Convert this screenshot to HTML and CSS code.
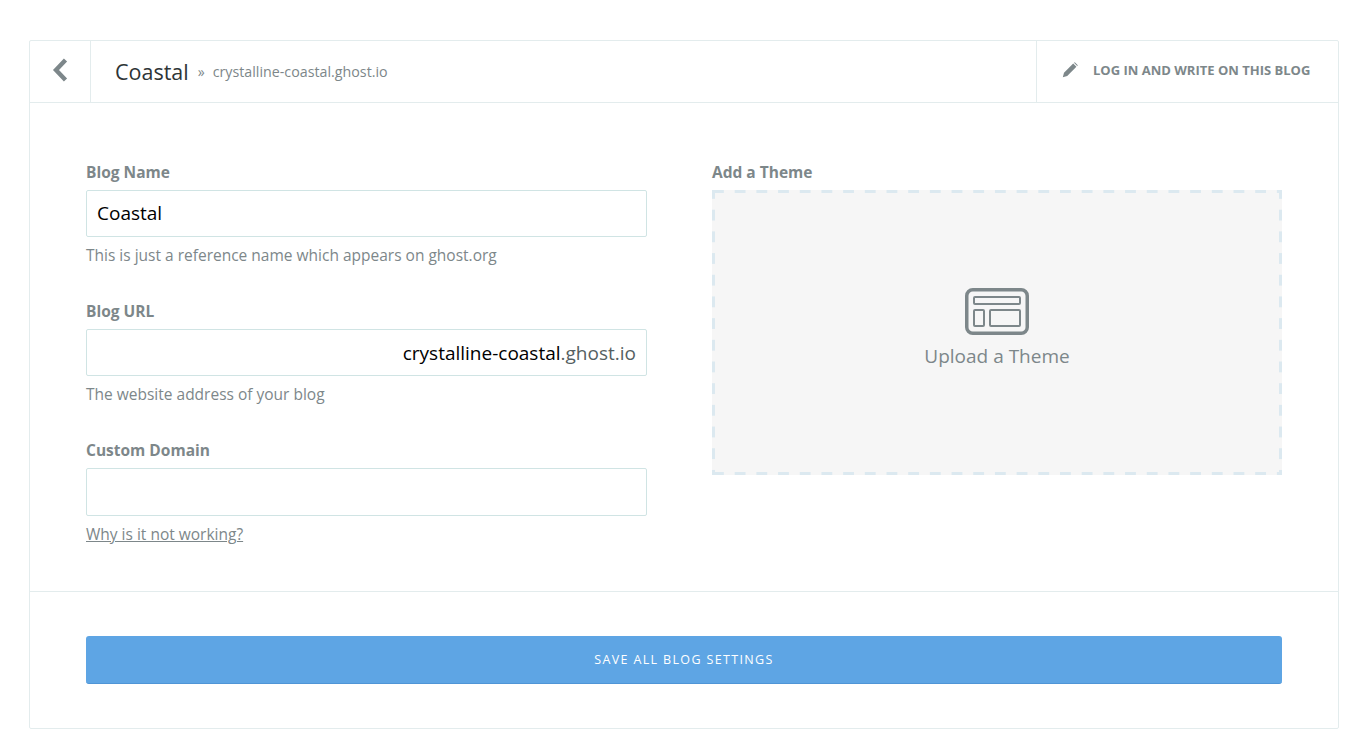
FILE: index.html
```html
<!DOCTYPE html>
<html lang="en">
<head>
  <meta charset="UTF-8">
  <meta name="viewport" content="width=device-width, initial-scale=1.0">
  <title>Blog Settings</title>
  <link rel="stylesheet" href="styles.css">
</head>
<body>
  <div class="panel">
    <header class="panel-header">
      <a class="back-link" href="#">
        <svg width="16" height="24" viewBox="0 0 16 24"><path d="M13.5 2 4 12l9.5 10" fill="none" stroke="#7d878a" stroke-width="4.4"/></svg>
      </a>
      <div class="blog-title">
        <span class="blog-name">Coastal</span>
        <span class="blog-sep">»</span>
        <span class="blog-address">crystalline-coastal.ghost.io</span>
      </div>
      <a class="write-link" href="#">
        <svg width="16" height="16" viewBox="0 0 16 16"><path d="M.8 15.2l1.2-4.4L11.2 1.6l3.2 3.2-9.2 9.2zM12 .8l.8-.6 3 3-.6.8z" fill="#7d878a"/></svg>
        <span>LOG IN AND WRITE ON THIS BLOG</span>
      </a>
    </header>

    <form class="settings">
      <div class="settings-left">
        <div class="field">
          <label for="blog-name">Blog Name</label>
          <input type="text" id="blog-name" class="name-input" value="Coastal">
          <p class="help">This is just a reference name which appears on ghost.org</p>
        </div>
        <div class="field">
          <label>Blog URL</label>
          <div class="url-input"><span class="url-sub">crystalline-coastal</span>.ghost.io</div>
          <p class="help">The website address of your blog</p>
        </div>
        <div class="field">
          <label for="custom-domain">Custom Domain</label>
          <input type="text" id="custom-domain" class="domain-input">
          <p class="help"><a href="#">Why is it not working?</a></p>
        </div>
      </div>
      <div class="settings-right">
        <label>Add a Theme</label>
        <div class="dropzone">
          <svg width="64" height="47" viewBox="0 0 64 47" fill="none" stroke="#7d878a">
            <rect x="1.75" y="1.75" width="60.5" height="43.5" rx="6" stroke-width="3.5"/>
            <rect x="9" y="9" width="46" height="7" rx="1" stroke-width="2"/>
            <rect x="9" y="22" width="10" height="16" rx="1" stroke-width="2"/>
            <rect x="25" y="22" width="30" height="16" rx="1" stroke-width="2"/>
          </svg>
          <span>Upload a Theme</span>
        </div>
      </div>
    </form>

    <div class="panel-footer">
      <button type="button" class="save-button">SAVE ALL BLOG SETTINGS</button>
    </div>
  </div>
</body>
</html>
```

FILE: styles.css
```css
body {
  font-family: "Open Sans", sans-serif;
  margin: 0;
  padding: 40px 27px 15px 29px;
  background: #fff;
  color: #7d878a;
}

a {
  color: inherit;
}

.panel {
  border: 1px solid #e3eced;
  border-radius: 2px;
}

.panel-header {
  display: flex;
  align-items: stretch;
  height: 61px;
  border-bottom: 1px solid #e3eced;
}

.back-link {
  display: flex;
  align-items: center;
  justify-content: center;
  width: 61px;
  padding-bottom: 3px;
  box-sizing: border-box;
  border-right: 1px solid #e3eced;
}

.blog-title {
  flex: 1;
  display: flex;
  align-items: center;
  padding-left: 24px;
}

.blog-name {
  font-size: 21.5px;
  color: #2e3436;
}

.blog-sep {
  margin: 0 8px 0 9px;
  font-size: 14px;
}

.blog-address {
  font-size: 14.25px;
}

.write-link {
  display: flex;
  align-items: center;
  gap: 15px;
  width: 302px;
  padding: 0 0 3px 25px;
  box-sizing: border-box;
  border-left: 1px solid #e3eced;
  font-size: 13px;
  font-weight: 700;
  text-decoration: none;
}

.settings {
  display: grid;
  grid-template-columns: 561px 570px;
  column-gap: 65px;
  height: 488px;
  padding: 0 56px;
  border-bottom: 1px solid #e3eced;
}

.settings-left,
.settings-right {
  padding-top: 58px;
}

.field {
  height: 139px;
}

label {
  display: block;
  height: 29px;
  font-size: 15.5px;
  font-weight: 700;
  line-height: 22px;
}

input,
.url-input {
  display: block;
  width: 100%;
  height: 47px;
  box-sizing: border-box;
  padding: 0 10px;
  border: 1px solid #d0e4e4;
  border-radius: 2px;
  font-family: inherit;
  font-size: 19px;
  color: #000;
  outline: none;
}

.name-input {
  padding-bottom: 2px;
}

.domain-input {
  height: 48px;
}

.url-input {
  line-height: 46px;
  text-align: right;
  color: #555f62;
}

.url-sub {
  color: #000;
}

.help {
  margin: 8px 0 0;
  font-size: 15.5px;
  line-height: 20px;
}

.dropzone {
  display: flex;
  flex-direction: column;
  align-items: center;
  justify-content: center;
  gap: 8px;
  height: 285px;
  box-sizing: border-box;
  padding-bottom: 9px;
  background-color: #f6f6f6;
  background-image:
    linear-gradient(to right, #dce9f0 50%, transparent 50%),
    linear-gradient(to right, #dce9f0 50%, transparent 50%),
    linear-gradient(to bottom, #dce9f0 50%, transparent 50%),
    linear-gradient(to bottom, #dce9f0 50%, transparent 50%);
  background-size: 21.7px 3px, 21.7px 3px, 3px 21.7px, 3px 21.7px;
  background-position: 1px 0, 1px 100%, 0 -2px, 100% -2px;
  background-repeat: repeat-x, repeat-x, repeat-y, repeat-y;
  font-size: 19px;
}

.panel-footer {
  padding: 44px 56px;
}

.save-button {
  display: block;
  width: 100%;
  height: 48px;
  border: 0;
  border-bottom: 1px solid #4f95d6;
  border-radius: 3px;
  background: #5ea5e4;
  color: #fff;
  font-family: inherit;
  font-size: 12.5px;
  letter-spacing: 1.35px;
}
```
